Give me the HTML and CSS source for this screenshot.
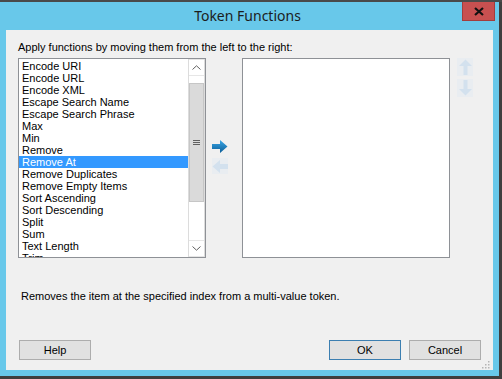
FILE: index.html
```html
<!DOCTYPE html>
<html lang="en">
<head>
    <meta charset="UTF-8">
    <title>Token Functions</title>
    <link rel="stylesheet" href="styles.css">
</head>
<body>
    <div class="top-strip"></div>
    <div class="window">
        <div class="titlebar">
            <span></span>
            <div class="title">Token Functions</div>
            <div class="close-btn">
                <svg width="10" height="9" viewBox="0 0 10 9"><path d="M1 1 L9 8 M9 1 L1 8" stroke="#111" stroke-width="2.2" fill="none"/></svg>
            </div>
        </div>

        <div class="client">
            <div class="hint">Apply functions by moving them from the left to the right:</div>

            <div class="lists">
                <div class="listbox source">
                    <ul class="items">
                        <li>Encode URI</li>
                        <li>Encode URL</li>
                        <li>Encode XML</li>
                        <li>Escape Search Name</li>
                        <li>Escape Search Phrase</li>
                        <li>Max</li>
                        <li>Min</li>
                        <li>Remove</li>
                        <li class="selected">Remove At</li>
                        <li>Remove Duplicates</li>
                        <li>Remove Empty Items</li>
                        <li>Sort Ascending</li>
                        <li>Sort Descending</li>
                        <li>Split</li>
                        <li>Sum</li>
                        <li>Text Length</li>
                        <li>Trim</li>
                    </ul>
                    <div class="scrollbar">
                        <div class="scroll-btn">
                            <svg width="9" height="5" viewBox="0 0 9 5"><path d="M0.5 4.5 L4.5 0.8 L8.5 4.5" stroke="#606060" fill="none"/></svg>
                        </div>
                        <div class="track">
                            <div class="thumb">
                                <svg width="7" height="7" viewBox="0 0 7 7"><path d="M0 1.5 H7 M0 3.5 H7 M0 5.5 H7" stroke="#606060" fill="none"/></svg>
                            </div>
                        </div>
                        <div class="scroll-btn">
                            <svg width="9" height="5" viewBox="0 0 9 5"><path d="M0.5 0.5 L4.5 4.2 L8.5 0.5" stroke="#606060" fill="none"/></svg>
                        </div>
                    </div>
                </div>

                <div class="move-buttons">
                    <div class="icon-btn">
                        <svg width="16" height="13" viewBox="0 0 16 13">
                            <defs>
                                <linearGradient id="blue" x1="0" y1="0" x2="0" y2="1">
                                    <stop offset="0" stop-color="#3aa6e6"/>
                                    <stop offset="1" stop-color="#0c5e98"/>
                                </linearGradient>
                            </defs>
                            <path d="M0 4 H8 V0 L15.5 6.5 L8 13 V9 H0 Z" fill="url(#blue)"/>
                        </svg>
                    </div>
                    <div class="icon-btn disabled">
                        <svg width="16" height="13" viewBox="0 0 16 13"><path d="M16 4 H8 V0 L0.5 6.5 L8 13 V9 H16 Z" fill="#d3e1ee"/></svg>
                    </div>
                </div>

                <div class="listbox target"></div>

                <div class="order-buttons">
                    <div class="icon-btn disabled tall">
                        <svg width="13" height="16" viewBox="0 0 13 16"><path d="M6.5 0.5 L13 7 H8.5 V16 H4.5 V7 H0 Z" fill="#d3e1ee"/></svg>
                    </div>
                    <div class="icon-btn disabled tall">
                        <svg width="13" height="16" viewBox="0 0 13 16"><path d="M6.5 15.5 L13 9 H8.5 V0 H4.5 V9 H0 Z" fill="#d3e1ee"/></svg>
                    </div>
                </div>
            </div>

            <div class="description">Removes the item at the specified index from a multi-value token.</div>

            <div class="buttons">
                <button class="btn">Help</button>
                <span class="spacer"></span>
                <button class="btn default">OK</button>
                <button class="btn">Cancel</button>
            </div>

            <svg class="grip" width="8" height="8" viewBox="0 0 8 8">
                <rect x="6" y="0" width="1.5" height="1.5" fill="#b5b5b5"/>
                <rect x="3" y="3" width="1.5" height="1.5" fill="#b5b5b5"/>
                <rect x="6" y="3" width="1.5" height="1.5" fill="#b5b5b5"/>
                <rect x="0" y="6" width="1.5" height="1.5" fill="#b5b5b5"/>
                <rect x="3" y="6" width="1.5" height="1.5" fill="#b5b5b5"/>
                <rect x="6" y="6" width="1.5" height="1.5" fill="#b5b5b5"/>
            </svg>
        </div>
    </div>
</body>
</html>
```

FILE: styles.css
```css
body {
    margin: 0;
    background: #3f3f3f;
    font-family: 'Liberation Sans', Arial, sans-serif;
    font-size: 11px;
    color: #000;
    width: 502px;
    height: 379px;
    overflow: hidden;
}

.top-strip {
    height: 2px;
    background: #4a4a4a;
}

.window {
    width: 499px;
    height: 374px;
    background: #68c8ea;
    display: flex;
    flex-direction: column;
}

.titlebar {
    height: 28px;
    display: grid;
    grid-template-columns: 33px 1fr 33px;
    padding-right: 4px;
}

.title {
    text-align: center;
    font-family: 'Noto Sans', 'Open Sans', sans-serif;
    font-size: 14px;
    line-height: 27px;
    color: #1c1c1c;
}

.close-btn {
    height: 19px;
    background: #c75050;
    border: 1px solid #a33d3d;
    border-top: none;
    box-sizing: border-box;
    display: flex;
    align-items: center;
    justify-content: center;
}

.client {
    position: relative;
    margin: 0 6px;
    height: 340px;
    background: #f0f0f0;
    padding: 11px 12px 0 12px;
    box-sizing: border-box;
}

.hint {
    line-height: 13px;
    white-space: nowrap;
}

.lists {
    display: flex;
    margin-top: 4px;
    height: 200px;
}

.listbox {
    background: #fff;
    border: 1px solid #8e9196;
    box-sizing: border-box;
    height: 200px;
}

.source {
    width: 188px;
    display: flex;
    overflow: hidden;
}

.target {
    width: 208px;
}

.items {
    list-style: none;
    margin: 0;
    padding: 1px 0 0 0;
    flex: 1;
    overflow: hidden;
}

.items li {
    height: 12px;
    line-height: 12px;
    padding-left: 3px;
    white-space: nowrap;
}

.items li.selected {
    background: #3399ff;
    color: #fff;
}

.scrollbar {
    width: 17px;
    display: flex;
    flex-direction: column;
    border-left: 1px solid #dcdcdc;
    border-right: 1px solid #dcdcdc;
    box-sizing: border-box;
}

.scroll-btn {
    height: 17px;
    display: flex;
    align-items: center;
    justify-content: center;
    border-top: 1px solid #e6e6e6;
    border-bottom: 1px solid #e6e6e6;
    box-sizing: border-box;
}

.track {
    flex: 1;
    background: #fff;
}

.thumb {
    margin-top: 7px;
    height: 119px;
    background: #dadada;
    border: 1px solid #c6c6c6;
    box-sizing: border-box;
    display: flex;
    align-items: center;
    justify-content: center;
}

.move-buttons {
    width: 36px;
    padding: 80px 0 0 6px;
    box-sizing: border-box;
    display: flex;
    flex-direction: column;
    gap: 4px;
}

.order-buttons {
    padding-left: 7px;
    display: flex;
    flex-direction: column;
    gap: 3px;
}

.icon-btn {
    width: 16px;
    height: 16px;
    display: flex;
    align-items: center;
    justify-content: center;
}

.icon-btn.disabled {
    background: #e9edf1;
}

.icon-btn.tall {
    height: 18px;
}

.description {
    margin: 32px 0 0 3px;
    line-height: 13px;
    white-space: nowrap;
}

.buttons {
    display: flex;
    gap: 8px;
    margin: 37px 0 0 1px;
}

.spacer {
    flex: 1;
}

.btn {
    width: 72px;
    height: 20px;
    background: #e1e1e1;
    border: 1px solid #adadad;
    font-family: 'Liberation Sans', Arial, sans-serif;
    font-size: 11px;
    color: #000;
    padding: 0;
}

.btn.default {
    border-color: #3c7fb1;
}

.grip {
    position: absolute;
    right: 3px;
    bottom: 1px;
}
```
